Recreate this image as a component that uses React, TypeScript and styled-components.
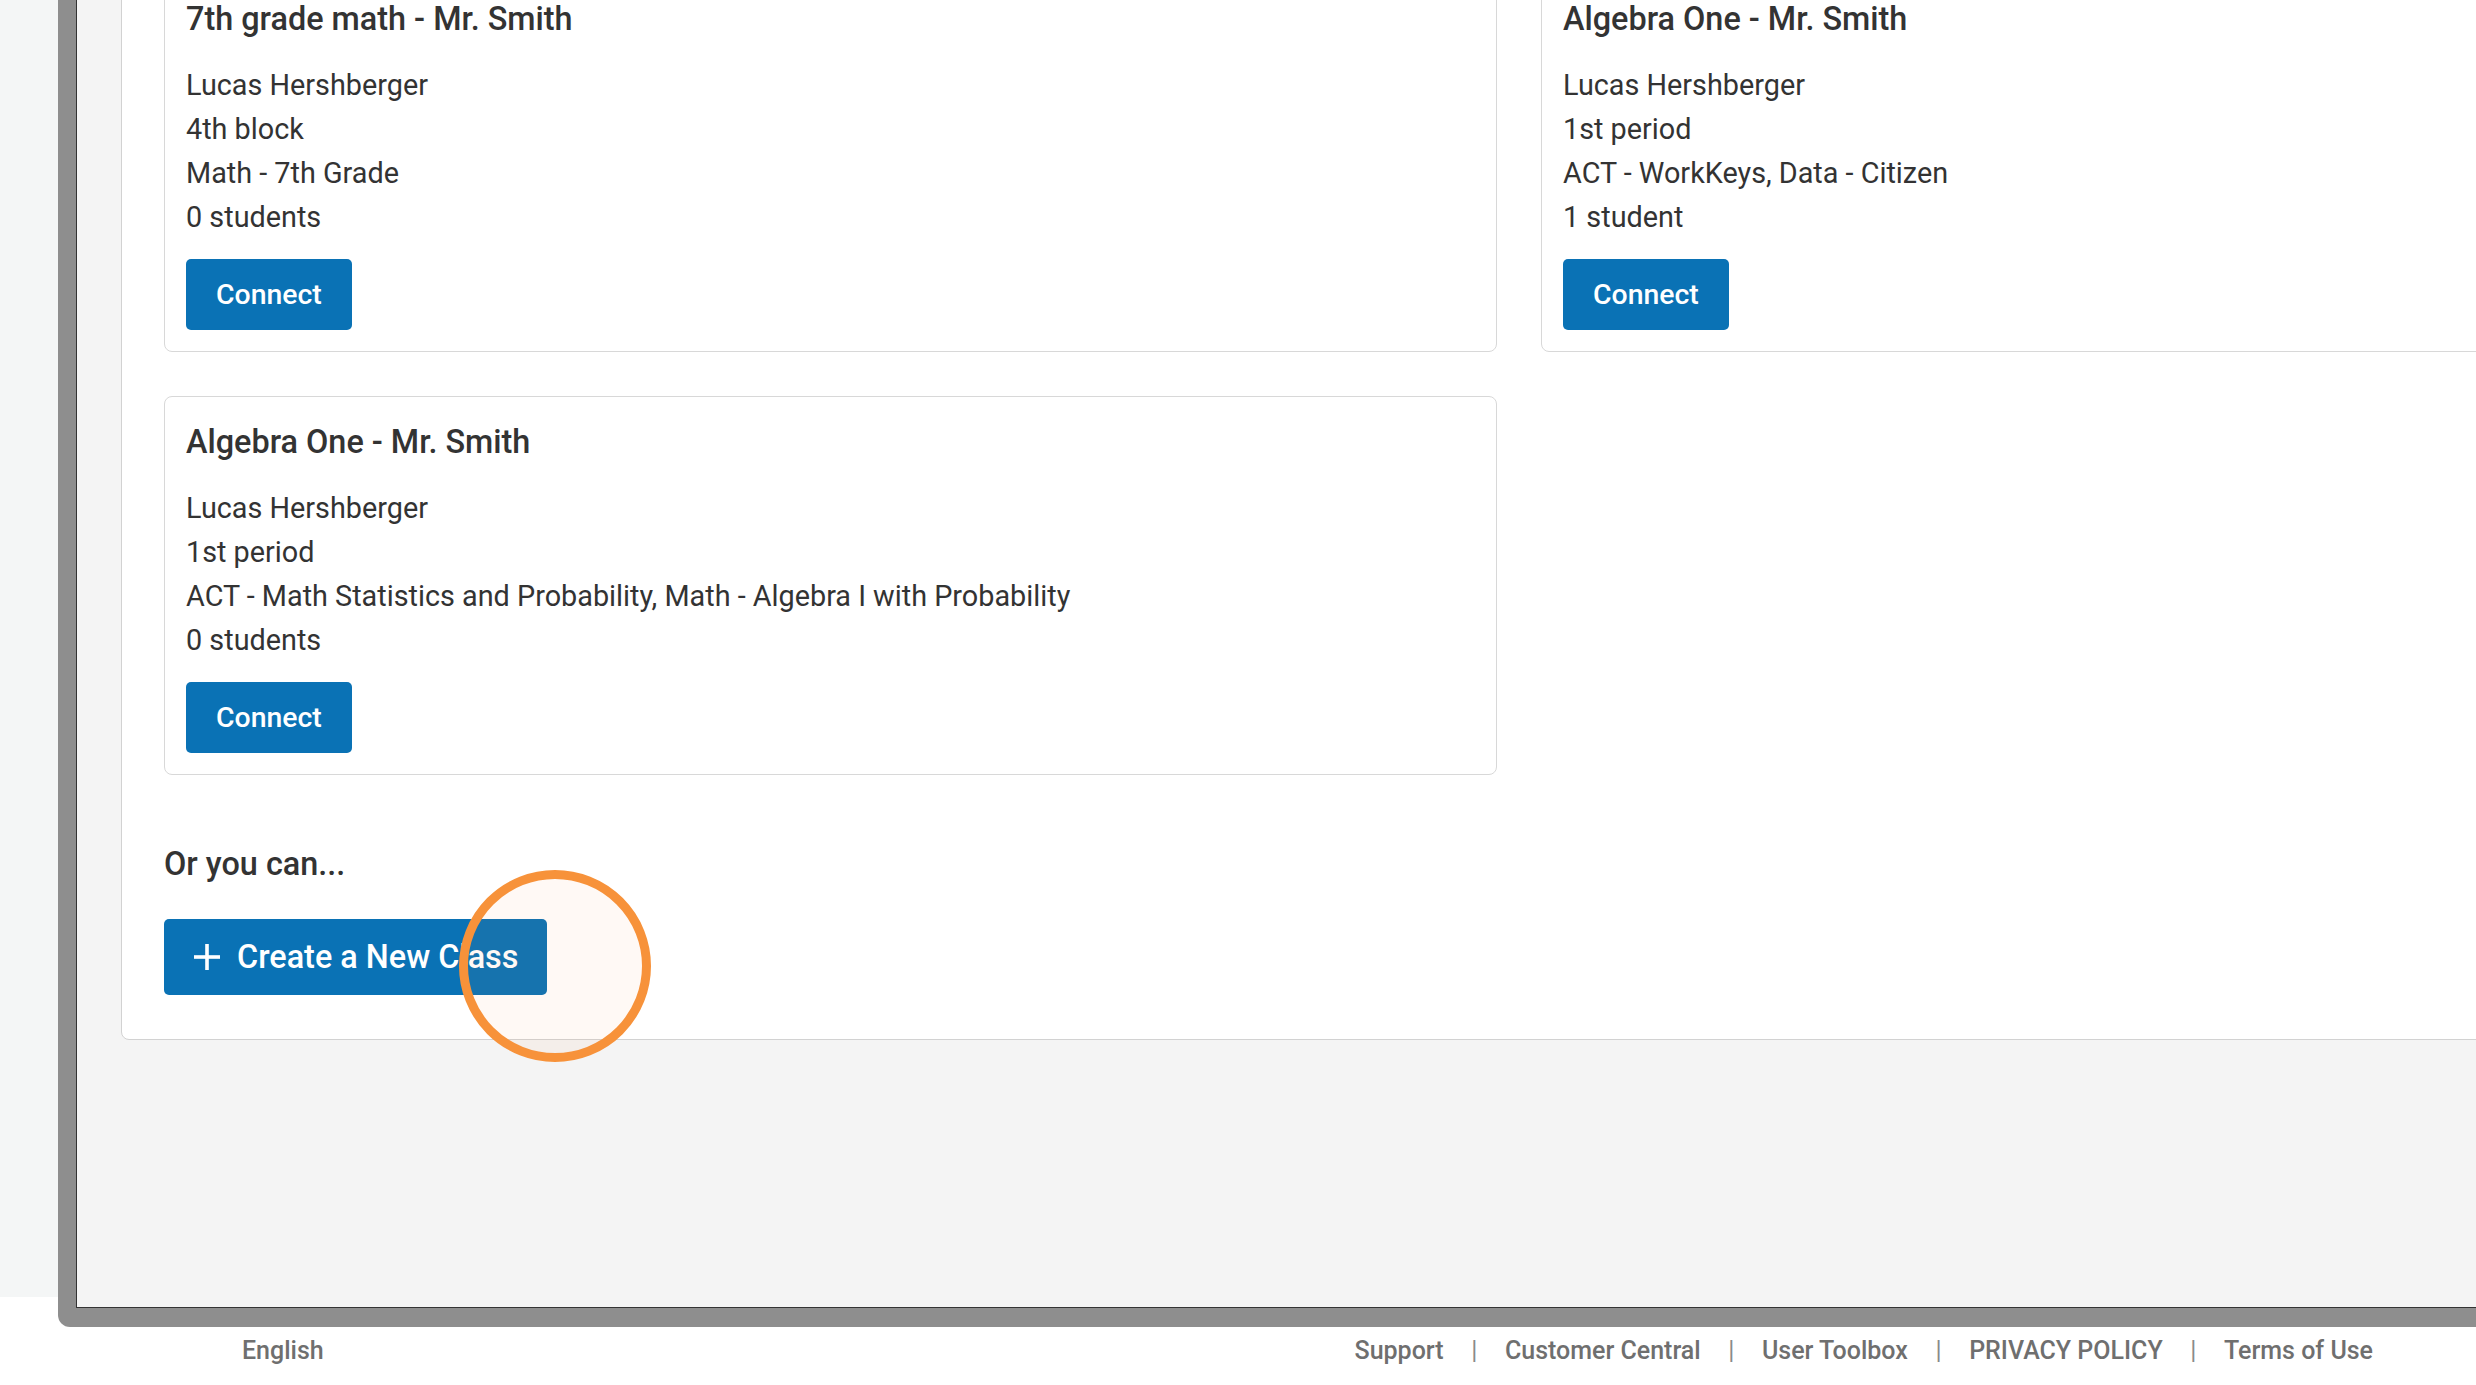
import styled, { createGlobalStyle } from 'styled-components';

interface ClassInfo {
  title: string;
  teacher: string;
  period: string;
  subjects: string;
  students: number;
}

const classes: ClassInfo[] = [
  {
    title: '7th grade math - Mr. Smith',
    teacher: 'Lucas Hershberger',
    period: '4th block',
    subjects: 'Math - 7th Grade',
    students: 0,
  },
  {
    title: 'Algebra One - Mr. Smith',
    teacher: 'Lucas Hershberger',
    period: '1st period',
    subjects: 'ACT - WorkKeys, Data - Citizen',
    students: 1,
  },
  {
    title: 'Algebra One - Mr. Smith',
    teacher: 'Lucas Hershberger',
    period: '1st period',
    subjects: 'ACT - Math Statistics and Probability, Math - Algebra I with Probability',
    students: 0,
  },
];

const footerLinks = ['Support', 'Customer Central', 'User Toolbox', 'PRIVACY POLICY', 'Terms of Use'];

const GlobalStyle = createGlobalStyle`
  html, body {
    margin: 0;
    padding: 0;
    background: #fff;
    overflow: hidden;
  }

  body {
    font-family: Roboto, "Noto Sans", "Liberation Sans", sans-serif;
    color: #333;
  }

  * {
    box-sizing: border-box;
  }
`;

const PlusIcon = () => (
  <svg width="26" height="26" viewBox="0 0 26 26" aria-hidden="true">
    <rect x="11.2" y="0" width="3.6" height="26" fill="#fff" />
    <rect x="0" y="11.2" width="26" height="3.6" fill="#fff" />
  </svg>
);

const App = () => {
  return (
    <Page>
      <GlobalStyle />
      <Stage>
        <Frame>
          <Viewport>
            <Panel>
              <CardGrid>
                {classes.map((c, i) => (
                  <Card key={i}>
                    <CardTitle>{c.title}</CardTitle>
                    <CardBody>
                      <p>{c.teacher}</p>
                      <p>{c.period}</p>
                      <p>{c.subjects}</p>
                      <p>{c.students} {c.students === 1 ? 'student' : 'students'}</p>
                    </CardBody>
                    <ConnectButton type="button">Connect</ConnectButton>
                  </Card>
                ))}
              </CardGrid>

              <AltHeading>Or you can...</AltHeading>

              <ActionRow>
                <CreateButton type="button">
                  <PlusIcon />
                  <span>Create a New Class</span>
                </CreateButton>
                <ClickRing />
              </ActionRow>
            </Panel>
          </Viewport>
        </Frame>
      </Stage>

      <Footer>
        <Language>English</Language>
        <LinkList>
          {footerLinks.map((link, i) => (
            <li key={link}>
              {i > 0 && <Divider>|</Divider>}
              <FooterLink href="#">{link}</FooterLink>
            </li>
          ))}
        </LinkList>
      </Footer>
    </Page>
  );
};

const Page = styled.div`
  position: relative;
  width: 100vw;
  height: 100vh;
  overflow: hidden;
  background: #fff;
`;

const Stage = styled.div`
  height: 1327px;
  padding-left: 58px;
  background:
    linear-gradient(#f4f6f6, #f4f6f6) 0 0 / 58px 1297px no-repeat,
    #fff;
`;

const Frame = styled.div`
  height: 100%;
  padding: 0 0 19px 18px;
  background: #8e8e8e;
  border-bottom-left-radius: 12px;
`;

const Viewport = styled.div`
  height: 100%;
  overflow: hidden;
  background: #f4f4f4;
  border-left: 1px solid #333;
  border-bottom: 1px solid #333;
  padding-left: 44px;
`;

const Panel = styled.section`
  width: 3000px;
  margin-top: -72px;
  padding: 44px 0 44px 42px;
  background: #fff;
  border: 1px solid #d2d2d2;
  border-radius: 8px;
`;

const CardGrid = styled.div`
  display: grid;
  grid-template-columns: 1333px 1333px;
  gap: 44px;
`;

const Card = styled.article`
  padding: 26px 21px 21px;
  border: 1px solid #d8d8d8;
  border-radius: 8px;
  background: #fff;
`;

const CardTitle = styled.h3`
  margin: 0 0 24.5px;
  font-size: 32.4px;
  font-weight: 500;
  line-height: 38px;
  color: #333;
`;

const CardBody = styled.div`
  margin-bottom: 20.5px;

  p {
    margin: 0;
    font-size: 28.8px;
    line-height: 44px;
    color: #333;
  }
`;

const ConnectButton = styled.button`
  display: block;
  height: 71px;
  padding: 0 30px;
  border: none;
  border-radius: 5px;
  background: #0a72b5;
  color: #fff;
  font-family: inherit;
  font-size: 28.4px;
  font-weight: 500;
  cursor: pointer;
`;

const AltHeading = styled.h4`
  margin: 70px 0 36px;
  font-size: 32.4px;
  font-weight: 500;
  line-height: 38px;
  color: #333;
`;

const ActionRow = styled.div`
  position: relative;
  display: inline-block;
`;

const CreateButton = styled.button`
  display: flex;
  align-items: center;
  gap: 17px;
  height: 76px;
  padding: 0 29px 0 30px;
  border: none;
  border-radius: 5px;
  background: #0a72b5;
  color: #fff;
  font-family: inherit;
  font-size: 32.4px;
  font-weight: 500;
  cursor: pointer;
`;

/* click highlight drawn over the button */
const ClickRing = styled.div`
  position: absolute;
  left: 295px;
  top: -49px;
  width: 192px;
  height: 192px;
  border: 9px solid #f7923a;
  border-radius: 50%;
  background: rgba(247, 146, 58, 0.05);
  pointer-events: none;
`;

const Footer = styled.footer`
  display: flex;
  align-items: center;
  justify-content: space-between;
  height: 46px;
  padding: 0 103px 0 242px;
`;

const Language = styled.span`
  font-size: 25px;
  font-weight: 500;
  color: #6f6f6f;
`;

const LinkList = styled.ul`
  display: flex;
  margin: 0;
  padding: 0;
  list-style: none;

  li {
    display: flex;
    align-items: center;
  }
`;

const Divider = styled.span`
  margin: 0 27.6px;
  font-size: 25px;
  color: #8a8a8a;
`;

const FooterLink = styled.a`
  font-size: 25px;
  font-weight: 500;
  color: #6f6f6f;
  text-decoration: none;

  &:hover {
    text-decoration: underline;
  }
`;

export default App;
